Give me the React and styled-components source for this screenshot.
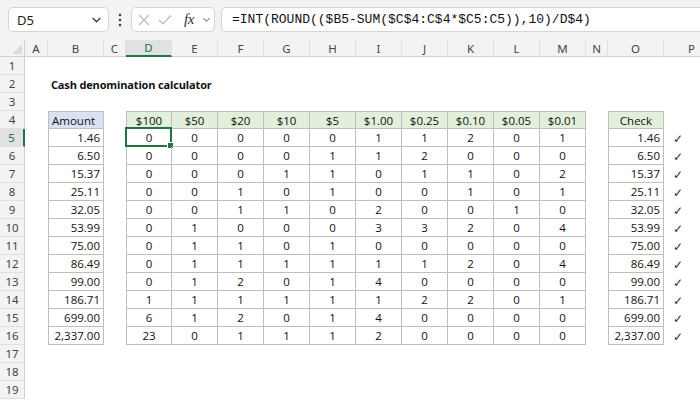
import styled, { createGlobalStyle } from 'styled-components';

const GREEN = '#217346';
const LINE = '#bfbfbf';

const GlobalStyle = createGlobalStyle`
  html, body { margin: 0; padding: 0; background: #ffffff; }
  body { font-family: "Open Sans", "Noto Sans", sans-serif; overflow: hidden; }
  * { box-sizing: border-box; }
`;

const denoms = ['$100', '$50', '$20', '$10', '$5', '$1.00', '$0.25', '$0.10', '$0.05', '$0.01'];

const rows = [
  ['1.46', [0, 0, 0, 0, 0, 1, 1, 2, 0, 1]],
  ['6.50', [0, 0, 0, 0, 1, 1, 2, 0, 0, 0]],
  ['15.37', [0, 0, 0, 1, 1, 0, 1, 1, 0, 2]],
  ['25.11', [0, 0, 1, 0, 1, 0, 0, 1, 0, 1]],
  ['32.05', [0, 0, 1, 1, 0, 2, 0, 0, 1, 0]],
  ['53.99', [0, 1, 0, 0, 0, 3, 3, 2, 0, 4]],
  ['75.00', [0, 1, 1, 0, 1, 0, 0, 0, 0, 0]],
  ['86.49', [0, 1, 1, 1, 1, 1, 1, 2, 0, 4]],
  ['99.00', [0, 1, 2, 0, 1, 4, 0, 0, 0, 0]],
  ['186.71', [1, 1, 1, 1, 1, 1, 2, 2, 0, 1]],
  ['699.00', [6, 1, 2, 0, 1, 4, 0, 0, 0, 0]],
  ['2,337.00', [23, 0, 1, 1, 1, 2, 0, 0, 0, 0]],
];

const colLetters = ['A', 'B', 'C', 'D', 'E', 'F', 'G', 'H', 'I', 'J', 'K', 'L', 'M', 'N', 'O', 'P'];

// TOOLBAR
const Toolbar = styled.div`
  height: 40px;
  background: #f3f3f3;
  display: flex;
  align-items: flex-start;
  padding: 7px 0 0 8px;
`;

const Box = styled.div`
  height: 25px;
  background: #ffffff;
  border: 1px solid #d4d4d4;
  border-radius: 5px;
  display: flex;
  align-items: center;
`;

const NameBox = styled(Box)`
  width: 101px;
  padding: 0 6px 0 8px;
  justify-content: space-between;
  font-size: 13px;
  color: #222;
  font-family: "Noto Sans", sans-serif;
`;

const Dots = styled.div`
  width: 22px;
  height: 25px;
  display: flex;
  align-items: center;
  justify-content: center;
`;

const FxGroup = styled(Box)`
  width: 84px;
  padding: 0 3px 0 6px;
  justify-content: space-between;
`;

const Fx = styled.span`
  font-family: "Liberation Serif", serif;
  font-style: italic;
  font-size: 15px;
  color: #333;
  letter-spacing: -0.5px;
  margin-left: 4px;
`;

const FormulaBox = styled(Box)`
  flex: 1;
  margin-left: 6px;
  border-right: none;
  border-radius: 5px 0 0 5px;
  padding-left: 10px;
  font-family: "Liberation Mono", "DejaVu Sans Mono", monospace;
  font-size: 13px;
  color: #111;
  white-space: nowrap;
  overflow: hidden;
`;

// SHEET
const Sheet = styled.div`
  display: grid;
  grid-template-columns: 25px 23px 56px 22px repeat(10, 46px) 22px 56px 56px;
  grid-auto-rows: 18px;
  grid-template-rows: 17px;
  font-size: 11.5px;
  color: #111;
`;

const Corner = styled.div`
  background: #f3f3f3;
  border-right: 1px solid #d0d0d0;
  border-bottom: 1px solid #d0d0d0;
  position: relative;
  &::after {
    content: '';
    position: absolute;
    right: 2px;
    bottom: 2px;
    border-left: 10px solid transparent;
    border-bottom: 10px solid #dcdcdc;
  }
`;

const ColHead = styled.div`
  background: ${p => (p.$active ? '#e1e1e1' : '#f3f3f3')};
  border-right: 1px solid #e0e0e0;
  border-bottom: ${p => (p.$active ? `2px solid ${GREEN}` : '1px solid #d0d0d0')};
  color: ${p => (p.$active ? GREEN : '#444')};
  display: flex;
  align-items: center;
  justify-content: center;
  font-family: "Noto Sans", sans-serif;
  font-size: 11.5px;
`;

const RowHead = styled.div`
  background: ${p => (p.$active ? '#e1e1e1' : '#f3f3f3')};
  border-bottom: 1px solid #e0e0e0;
  border-right: ${p => (p.$active ? `2px solid ${GREEN}` : '1px solid #d0d0d0')};
  color: ${p => (p.$active ? GREEN : '#444')};
  display: flex;
  align-items: center;
  justify-content: center;
  font-family: "Noto Sans", sans-serif;
  font-size: 11.5px;
`;

const Cell = styled.div`
  position: relative;
  background: ${p => p.$bg || 'transparent'};
  border-right: ${p => (p.$boxed ? `1px solid ${LINE}` : 'none')};
  border-bottom: ${p => (p.$boxed ? `1px solid ${LINE}` : 'none')};
  border-left: ${p => (p.$left ? `1px solid ${LINE}` : 'none')};
  border-top: ${p => (p.$top ? `1px solid ${LINE}` : 'none')};
  display: flex;
  align-items: center;
  justify-content: ${p => p.$align || 'flex-start'};
  padding: 0 3px;
  white-space: nowrap;
`;

const Title = styled(Cell)`
  grid-column: span 6;
  font-weight: 700;
  font-size: 11px;
  letter-spacing: -0.15px;
`;

const CheckMark = styled(Cell)`
  padding-left: 9px;
  color: #333;
  font-size: 12px;
`;

const Selection = styled.div`
  position: absolute;
  inset: -2px -1px -1px -2px;
  border: 2px solid ${GREEN};
  pointer-events: none;
  &::after {
    content: '';
    position: absolute;
    right: -4px;
    bottom: -4px;
    width: 5px;
    height: 5px;
    background: ${GREEN};
    border: 1px solid #fff;
  }
`;

function Chevron({ size = 10, color = '#333' }) {
  return (
    <svg width={size} height={size} viewBox="0 0 10 10">
      <polyline points="1.5,3.5 5,7 8.5,3.5" fill="none" stroke={color} strokeWidth="1.2" />
    </svg>
  );
}

function Empty({ n }) {
  return Array.from({ length: n }).map((_, i) => <Cell key={i} />);
}

export default function App() {
  return (
    <>
      <GlobalStyle />
      <Toolbar>
        <NameBox>
          D5
          <Chevron size={11} />
        </NameBox>
        <Dots>
          <svg width="4" height="14" viewBox="0 0 4 14">
            <circle cx="2" cy="2" r="1.3" fill="#444" />
            <circle cx="2" cy="7" r="1.3" fill="#444" />
            <circle cx="2" cy="12" r="1.3" fill="#444" />
          </svg>
        </Dots>
        <FxGroup>
          <svg width="12" height="12" viewBox="0 0 12 12">
            <path d="M1 1 L11 11 M11 1 L1 11" stroke="#b8b8b8" strokeWidth="1.1" />
          </svg>
          <svg width="14" height="12" viewBox="0 0 14 12">
            <polyline points="1,6 5,10 13,1.5" fill="none" stroke="#b8b8b8" strokeWidth="1.1" />
          </svg>
          <Fx>fx</Fx>
          <Chevron size={9} color="#888" />
        </FxGroup>
        <FormulaBox>=INT(ROUND(($B5-SUM($C$4:C$4*$C5:C5)),10)/D$4)</FormulaBox>
      </Toolbar>

      <Sheet>
        <Corner />
        {colLetters.map(l => (
          <ColHead key={l} $active={l === 'D'}>{l}</ColHead>
        ))}

        <RowHead>1</RowHead>
        <Empty n={16} />

        <RowHead>2</RowHead>
        <Cell />
        <Title>Cash denomination calculator</Title>
        <Empty n={9} />

        <RowHead>3</RowHead>
        <Empty n={16} />

        <RowHead>4</RowHead>
        <Cell />
        <Cell $boxed $top $left $bg="#d9e1f2">Amount</Cell>
        <Cell />
        {denoms.map((d, i) => (
          <Cell key={d} $boxed $top $left={i === 0} $bg="#e2efda" $align="center">{d}</Cell>
        ))}
        <Cell />
        <Cell $boxed $top $left $bg="#e2efda" $align="center">Check</Cell>
        <Cell />

        {rows.map(([amt, counts], r) => (
          <Row key={amt} n={r + 5} amt={amt} counts={counts} />
        ))}

        {[17, 18, 19].map(n => (
          <Blank key={n} n={n} />
        ))}
      </Sheet>
    </>
  );
}

function Row({ n, amt, counts }) {
  return (
    <>
      <RowHead $active={n === 5}>{n}</RowHead>
      <Cell />
      <Cell $boxed $left $align="flex-end">{amt}</Cell>
      <Cell />
      {counts.map((c, i) => (
        <Cell key={i} $boxed $left={i === 0} $align="center">
          {c}
          {n === 5 && i === 0 && <Selection />}
        </Cell>
      ))}
      <Cell />
      <Cell $boxed $left $align="flex-end">{amt}</Cell>
      <CheckMark>✓</CheckMark>
    </>
  );
}

function Blank({ n }) {
  return (
    <>
      <RowHead>{n}</RowHead>
      <Empty n={16} />
    </>
  );
}
